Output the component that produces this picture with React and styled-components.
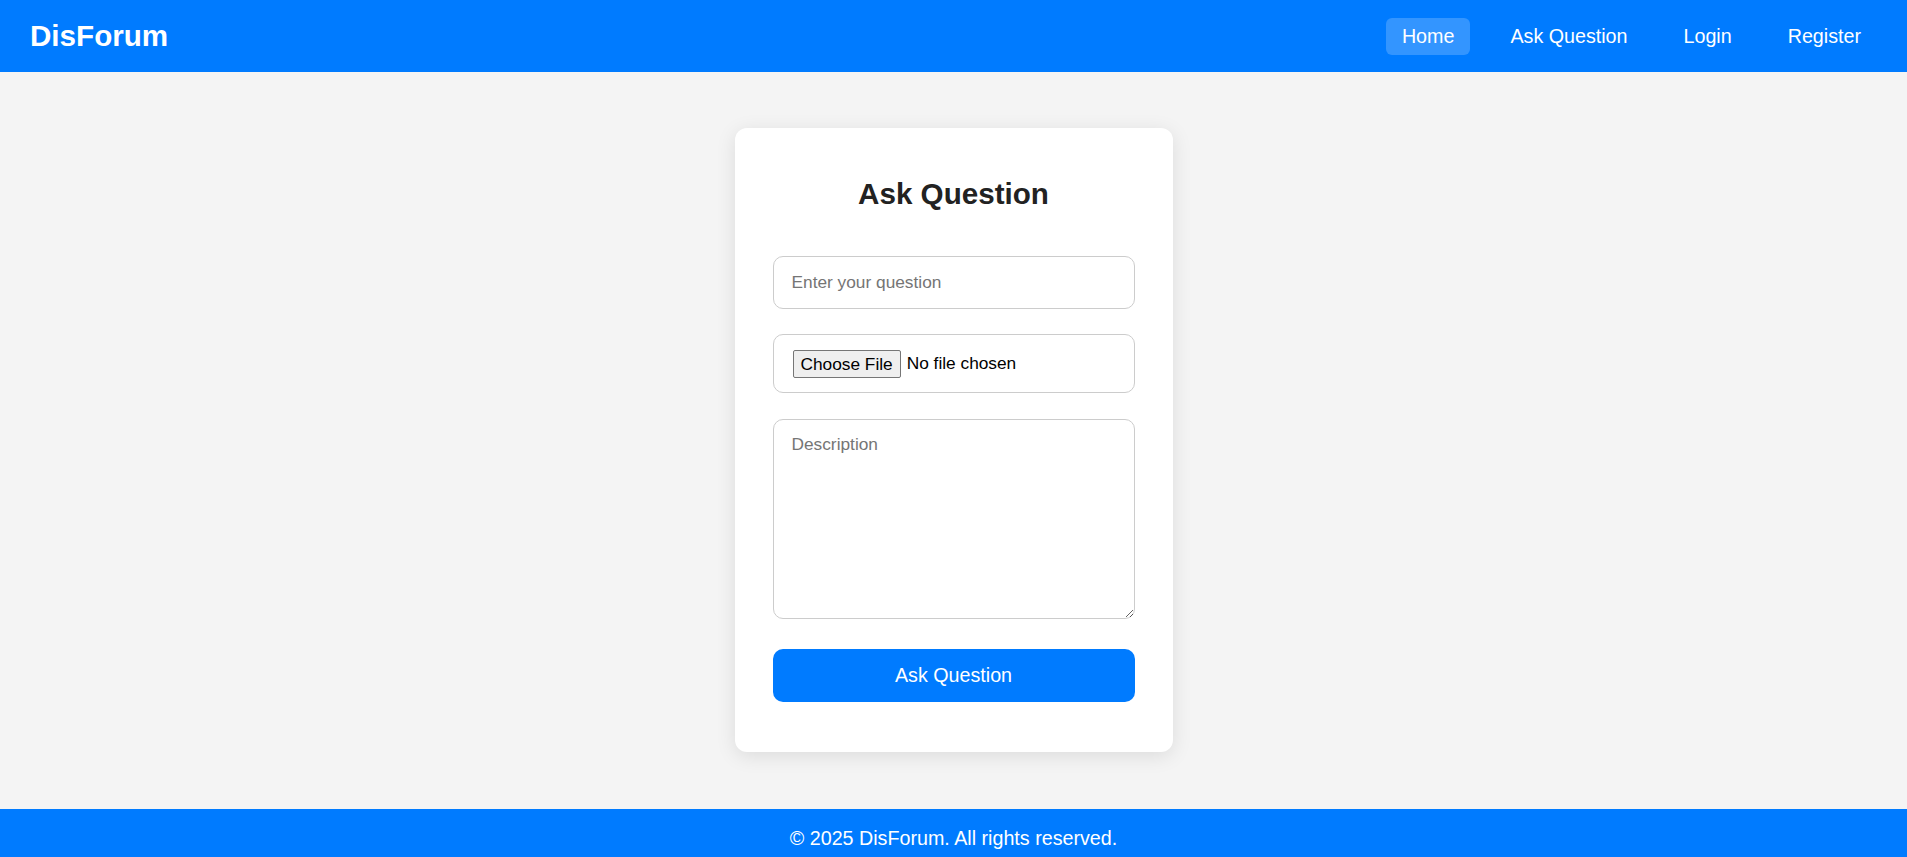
import React from "react";
import styled, { createGlobalStyle } from "styled-components";

const GlobalStyle = createGlobalStyle`
  * { box-sizing: border-box; }
  html, body { margin: 0; padding: 0; }
  body {
    background: #f4f4f4;
    font-family: "Liberation Sans", Arial, sans-serif;
    color: #222;
  }
`;

const Page = styled.div`
  display: flex;
  flex-direction: column;
  min-height: 100vh;
`;

const Header = styled.header`
  height: 72px;
  background: #007bff;
  display: flex;
  align-items: center;
  justify-content: space-between;
  padding: 0 30px;
`;

const Logo = styled.div`
  color: #fff;
  font-size: 29.6px;
  font-weight: 700;
`;

const Nav = styled.nav`
  display: flex;
  align-items: center;
  gap: 24px;
`;

const NavLink = styled.a`
  color: #fff;
  text-decoration: none;
  font-size: 19.7px;
  line-height: 23px;
  padding: 7px 16px;
  border-radius: 6px;
  background: ${(p) => (p.$active ? "rgba(255,255,255,0.2)" : "transparent")};
`;

const Main = styled.main`
  flex: 1;
  display: flex;
  justify-content: center;
  align-items: flex-start;
  padding: 56px 0 57px;
`;

const Card = styled.div`
  width: 438px;
  background: #fff;
  border-radius: 12px;
  box-shadow: 0 4px 20px rgba(0, 0, 0, 0.1);
  padding: 38px 38px 50px;
  display: flex;
  flex-direction: column;
`;

const Title = styled.h2`
  margin: 11px 0 45px;
  font-size: 29.6px;
  line-height: 34px;
  font-weight: 700;
  text-align: center;
  color: #222;
`;

const fieldBase = `
  width: 100%;
  border: 1px solid #ccc;
  border-radius: 10px;
  font-family: "Liberation Sans", Arial, sans-serif;
  font-size: 17.3px;
  background: #fff;
  outline: none;
  display: block;
`;

const TextInput = styled.input`
  ${fieldBase}
  height: 53px;
  padding: 0 18px;
  margin-bottom: 25px;
  &::placeholder { color: #757575; }
`;

const FileInput = styled.input`
  ${fieldBase}
  height: 59px;
  padding: 14px 19px;
  margin-bottom: 26px;
  color: #000;
  line-height: 28px;
  &::file-selector-button {
    height: 28px;
    padding: 0 7px;
    margin-right: 6px;
    border: 1px solid #767676;
    border-radius: 2px;
    background: #efefef;
    color: #000;
    font-family: "Liberation Sans", Arial, sans-serif;
    font-size: 17.3px;
    vertical-align: middle;
  }
`;

const TextArea = styled.textarea`
  ${fieldBase}
  height: 200px;
  padding: 14px 18px;
  margin-bottom: 30px;
  resize: both;
  &::placeholder { color: #757575; }
`;

const SubmitButton = styled.button`
  width: 100%;
  height: 53px;
  border: none;
  border-radius: 10px;
  background: #007bff;
  color: #fff;
  font-family: "Liberation Sans", Arial, sans-serif;
  font-size: 19.7px;
  cursor: pointer;
`;

const Footer = styled.footer`
  background: #007bff;
  color: #fff;
  text-align: center;
  padding: 18px;
  font-size: 19.7px;
`;

export default function App() {
  return (
    <Page>
      <GlobalStyle />
      <Header>
        <Logo>DisForum</Logo>
        <Nav>
          <NavLink href="#" $active>Home</NavLink>
          <NavLink href="#">Ask Question</NavLink>
          <NavLink href="#">Login</NavLink>
          <NavLink href="#">Register</NavLink>
        </Nav>
      </Header>
      <Main>
        <Card>
          <Title>Ask Question</Title>
          <form onSubmit={(e) => e.preventDefault()}>
            <TextInput type="text" placeholder="Enter your question" />
            <FileInput type="file" />
            <TextArea placeholder="Description" />
            <SubmitButton type="submit">Ask Question</SubmitButton>
          </form>
        </Card>
      </Main>
      <Footer>© 2025 DisForum. All rights reserved.</Footer>
    </Page>
  );
}
